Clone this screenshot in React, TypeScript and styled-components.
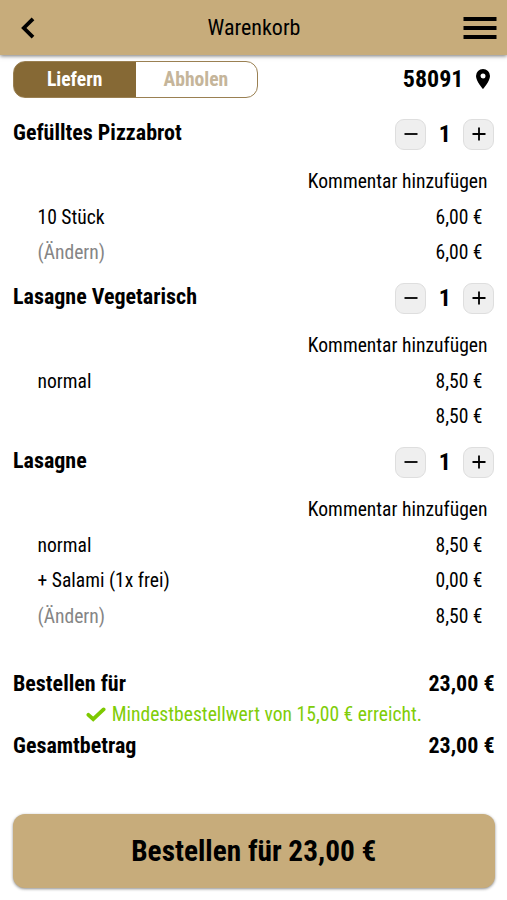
import React from "react";
import styled, { createGlobalStyle } from "styled-components";

const Global = createGlobalStyle`
  * { box-sizing: border-box; }
  body { margin: 0; background: #fff; color: #000; }
  body, button { font-family: "Roboto Condensed", Roboto, sans-serif; font-stretch: 75%; }
  button { color: inherit; padding: 0; border: 0; background: none; }
`;

const Page = styled.div`
  width: 507px;
  height: 900px;
  overflow: hidden;
  font-size: 19.6px;
  font-weight: 430;
  line-height: 24px;
`;

const Header = styled.header`
  height: 55px;
  padding: 0 10.5px 0 15.5px;
  display: grid;
  grid-template-columns: 60px 1fr 64px;
  align-items: center;
  background: #c7ac7b;
  box-shadow: 0 1px 4px rgba(0, 0, 0, 0.55);
`;

const Title = styled.h1`
  margin: 0;
  font-size: 22px;
  font-weight: 430;
  text-align: center;
`;

const IconButton = styled.button<{ $end?: boolean }>`
  display: flex;
  justify-content: ${(p) => (p.$end ? "flex-end" : "flex-start")};
`;

const Content = styled.main`
  padding: 6px 12.5px 0 13px;
`;

const TopRow = styled.div`
  display: flex;
  justify-content: space-between;
  height: 45px;
`;

const Toggle = styled.div`
  display: flex;
  width: 244.5px;
  height: 36.5px;
  border: 1px solid #9a8052;
  border-radius: 12px;
  background: linear-gradient(to right, #866935 50%, #fff 50%);
  overflow: hidden;
`;

const ToggleOption = styled.button<{ $active?: boolean }>`
  flex: 1;
  font-size: 19.6px;
  font-weight: 700;
  color: ${(p) => (p.$active ? "#fff" : "#c5b59a")};
`;

const Postcode = styled.div`
  display: flex;
  align-items: center;
  gap: 12px;
  height: 36px;
  padding-right: 5px;
  font-size: 24px;
  font-weight: 700;
`;

const Item = styled.section`
  display: flex;
  flex-direction: column;
`;

const ItemHead = styled.div`
  display: flex;
  justify-content: space-between;
  height: 57px;
  padding-top: 13px;
`;

const ItemName = styled.h2`
  margin: 0;
  padding-top: 1px;
  font-size: 22px;
  line-height: 26px;
  font-weight: 700;
`;

const Stepper = styled.div`
  display: flex;
  align-items: center;
  justify-content: space-between;
  width: 99.5px;
  height: 30px;
  font-size: 24px;
  font-weight: 700;
`;

const StepButton = styled.button`
  display: flex;
  align-items: center;
  justify-content: center;
  width: 31px;
  height: 31px;
  border: 1px solid #dedede;
  border-radius: 9px;
  background: #efefef;
`;

const Comment = styled.div`
  height: 36px;
  padding: 6.6px 7px 0 0;
  text-align: right;
`;

const Line = styled.div`
  display: flex;
  justify-content: space-between;
  align-items: center;
  height: 35.5px;
  padding: 2px 12px 0 24.5px;
`;

const Label = styled.span<{ $muted?: boolean }>`
  color: ${(p) => (p.$muted ? "#858585" : "inherit")};
`;

const Summary = styled.div`
  padding-top: 37px;
`;

const Total = styled.div`
  display: flex;
  justify-content: space-between;
  font-size: 22px;
  line-height: 26px;
  font-weight: 700;
`;

const Notice = styled.div`
  display: flex;
  align-items: center;
  justify-content: center;
  gap: 6px;
  height: 36px;
  font-weight: 410;
  color: #80cd08;
`;

const OrderButton = styled.button`
  display: block;
  width: 100%;
  height: 74.5px;
  margin-top: 55px;
  border-radius: 12px;
  background: #c7ac7b;
  box-shadow: 0 1px 3px rgba(0, 0, 0, 0.45);
  font-size: 29.3px;
  font-weight: 700;
`;

type Row = { label?: string; muted?: boolean; price: string };
const items: { name: string; rows: Row[] }[] = [
  {
    name: "Gefülltes Pizzabrot",
    rows: [
      { label: "10 Stück", price: "6,00 €" },
      { label: "(Ändern)", muted: true, price: "6,00 €" },
    ],
  },
  {
    name: "Lasagne Vegetarisch",
    rows: [{ label: "normal", price: "8,50 €" }, { price: "8,50 €" }],
  },
  {
    name: "Lasagne",
    rows: [
      { label: "normal", price: "8,50 €" },
      { label: "+ Salami (1x frei)", price: "0,00 €" },
      { label: "(Ändern)", muted: true, price: "8,50 €" },
    ],
  },
];

export default function App() {
  return (
    <Page>
      <Global />
      <Header>
        <IconButton aria-label="Zurück">
          <svg width="24" height="24" viewBox="0 0 24 24" fill="none" stroke="#000" strokeWidth="3.8">
            <path d="M17 2.8 7.8 12 17 21.2" />
          </svg>
        </IconButton>
        <Title>Warenkorb</Title>
        <IconButton $end aria-label="Menü">
          <svg width="34" height="24" viewBox="0 0 34 24" fill="#000">
            <path d="M0.5 1h33v4h-33zM0.5 10h33v4h-33zM0.5 19h33v4h-33z" />
          </svg>
        </IconButton>
      </Header>
      <Content>
        <TopRow>
          <Toggle>
            <ToggleOption $active>Liefern</ToggleOption>
            <ToggleOption>Abholen</ToggleOption>
          </Toggle>
          <Postcode>
            58091
            <svg width="14" height="20" viewBox="0 0 14 20">
              <path
                fillRule="evenodd"
                d="M7 0a7 7 0 0 0-7 7c0 5.2 7 13 7 13s7-7.8 7-13a7 7 0 0 0-7-7Zm0 4.5a2.5 2.5 0 1 1 0 5 2.5 2.5 0 0 1 0-5Z"
              />
            </svg>
          </Postcode>
        </TopRow>
        {items.map((item) => (
          <Item key={item.name}>
            <ItemHead>
              <ItemName>{item.name}</ItemName>
              <Stepper>
                <StepButton aria-label="Weniger">
                  <svg width="14" height="14" viewBox="0 0 14 14" stroke="#000" strokeWidth="1.8">
                    <path d="M0.5 7h13" />
                  </svg>
                </StepButton>
                1
                <StepButton aria-label="Mehr">
                  <svg width="14" height="14" viewBox="0 0 14 14" stroke="#000" strokeWidth="1.8">
                    <path d="M0.5 7h13M7 0.5v13" />
                  </svg>
                </StepButton>
              </Stepper>
            </ItemHead>
            <Comment>Kommentar hinzufügen</Comment>
            {item.rows.map((row, i) => (
              <Line key={i}>
                <Label $muted={row.muted}>{row.label}</Label>
                <span>{row.price}</span>
              </Line>
            ))}
          </Item>
        ))}
        <Summary>
          <Total>
            <span>Bestellen für</span>
            <span>23,00 €</span>
          </Total>
          <Notice>
            <svg
              width="20"
              height="15"
              viewBox="0 0 20 15"
              fill="none"
              stroke="#7dc900"
              strokeWidth="3.8"
              strokeLinecap="round"
            >
              <path d="M2.4 7.8 7.2 12.2 17.6 2.4" />
            </svg>
            Mindestbestellwert von 15,00 € erreicht.
          </Notice>
          <Total>
            <span>Gesamtbetrag</span>
            <span>23,00 €</span>
          </Total>
        </Summary>
        <OrderButton>Bestellen für 23,00 €</OrderButton>
      </Content>
    </Page>
  );
}
